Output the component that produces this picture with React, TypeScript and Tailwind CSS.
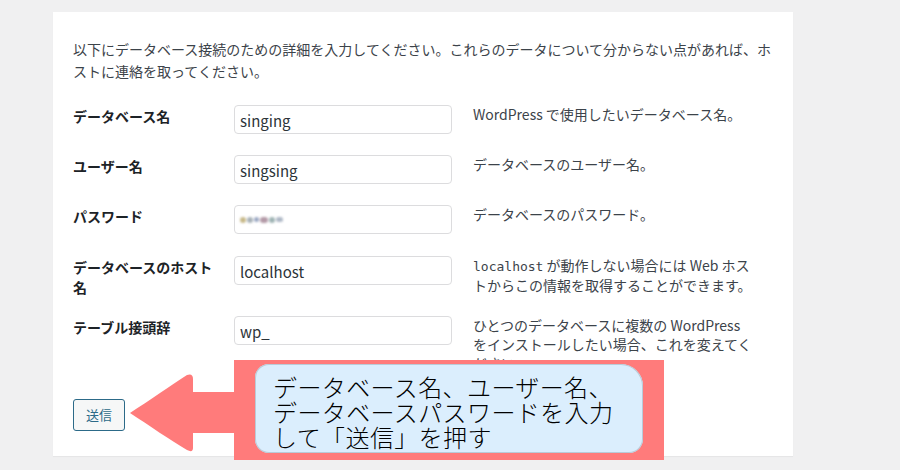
import React from "react";

const jp = { fontFamily: '"Noto Sans CJK JP", "Noto Sans", sans-serif' };
const mono = { fontFamily: '"DejaVu Sans Mono", "Liberation Mono", monospace' };

function Row({
  label,
  value,
  desc,
  className = "",
}: {
  label: React.ReactNode;
  value: React.ReactNode;
  desc: React.ReactNode;
  className?: string;
}) {
  return (
    <div className={`flex items-start ${className}`}>
      <div className="w-[161px] shrink-0 pt-[1px] text-[14px] font-bold leading-[20px] text-[#1d2327]">
        {label}
      </div>
      <div className="flex h-[29px] w-[218px] shrink-0 items-center rounded-[4px] border border-[#dcdcde] bg-white px-[5px] pt-[3px] text-[15px] text-[#2c3338]">
        {value}
      </div>
      <div className="ml-[21px] whitespace-nowrap text-[14px] leading-[19px] text-[#3c434a]">
        {desc}
      </div>
    </div>
  );
}

export default function App() {
  return (
    <div className="relative h-[470px] w-[900px] overflow-hidden bg-[#f0f0f1]" style={jp}>
      <div className="absolute left-[53px] top-[12px] h-[444px] w-[740px] bg-white px-[20px] pt-[26px] shadow-[0_1px_1px_rgba(0,0,0,0.04)]">
        <p className="whitespace-nowrap text-[14px] leading-[22px] text-[#3c434a]">
          以下にデータベース接続のための詳細を入力してください。これらのデータについて分からない点があれば、ホ
          <br />
          ストに連絡を取ってください。
        </p>

        <div className="mt-[23px] flex flex-col">
          <Row label="データベース名" value="singing" desc="WordPress で使用したいデータベース名。" className="mb-[21px]" />
          <Row label="ユーザー名" value="singsing" desc="データベースのユーザー名。" className="mb-[21px]" />
          <Row
            label="パスワード"
            value={
              <span className="-mt-[3px] flex items-center gap-[1px] blur-[1.2px]">
                <span className="h-[6px] w-[6px] rounded-full bg-[#c8b98a]" />
                <span className="h-[6px] w-[6px] rounded-full bg-[#a9b2b8]" />
                <span className="h-[5px] w-[5px] rounded-full bg-[#9aa7c2]" />
                <span className="h-[6px] w-[8px] rounded-full bg-[#b49aa8]" />
                <span className="h-[6px] w-[6px] rounded-full bg-[#9fb4b4]" />
                <span className="h-[5px] w-[7px] rounded-full bg-[#aeb8c6]" />
              </span>
            }
            desc="データベースのパスワード。"
            className="mb-[22px]"
          />
          <Row
            label={
              <>
                データベースのホスト
                <br />名
              </>
            }
            value="localhost"
            desc={
              <>
                <span style={mono} className="text-[13px]">localhost</span> が動作しない場合には Web ホス
                <br />
                トからこの情報を取得することができます。
              </>
            }
            className="mb-[19px]"
          />
          <Row
            label="テーブル接頭辞"
            value="wp_"
            desc={
              <>
                ひとつのデータベースに複数の WordPress
                <br />
                をインストールしたい場合、これを変えてく
                <br />
                ださい。
              </>
            }
          />
        </div>

        <button className="absolute left-[20px] top-[387px] flex h-[32px] w-[52px] items-center justify-center rounded-[3px] border border-[#2c6a88] bg-[#f6f7f7] text-[13px] text-[#2c6a88]">
          送信
        </button>
      </div>

      {/* Arrow */}
      <svg className="absolute left-[125px] top-[370px]" width="115" height="86" viewBox="0 0 115 86">
        <path
          d="M5 43 C 25 30, 45 16, 62 5 Q 68 3, 68 9 L 68 22 L 112 22 L 112 63 L 68 63 L 68 78 Q 68 83, 62 80 C 45 70, 25 56, 5 43 Z"
          fill="#ff7b7b"
        />
      </svg>

      {/* Callout */}
      <div className="absolute left-[234px] top-[360px] h-[100px] w-[430px] bg-[#ff7b7b] pl-[21px] pt-[4px]">
        <div className="h-[89px] w-[388px] rounded-[14px] rounded-tr-[22px] bg-[#dbeefd] pl-[18px] pt-[10px] shadow-[inset_0_0_0_1px_#b9cbd8]">
          <p className="whitespace-nowrap text-[24px] font-light leading-[25px] tracking-[0.4px] text-black">
            データベース名、ユーザー名、
            <br />
            データベースパスワードを入力
            <br />
            して「送信」を押す
          </p>
        </div>
      </div>
    </div>
  );
}
